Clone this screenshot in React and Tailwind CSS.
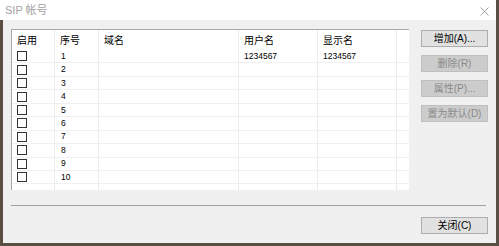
import React from 'react';

const COLS = [43, 44, 140, 79, 79];
const HEADERS = ['启用', '序号', '域名', '用户名', '显示名'];

const rows = Array.from({ length: 10 }, (_, i) => ({
    id: i + 1,
    domain: '',
    user: i === 0 ? '1234567' : '',
    display: i === 0 ? '1234567' : '',
}));

const Cell = ({ w, children, className = '' }) => (
    <div className={`h-full shrink-0 border-r border-[#ececec] flex items-center pl-[5px] ${className}`} style={{ width: w }}>
        {children}
    </div>
);

const DlgButton = ({ label, disabled }) => (
    <button
        className={`w-[67px] h-[17px] flex items-center justify-center text-[10px] leading-none border ${
            disabled ? 'bg-[#cccccc] border-[#bfbfbf] text-[#8a8a8a]' : 'bg-[#e1e1e1] border-[#adadad] text-black'
        }`}
    >
        {label}
    </button>
);

export default function App() {
    return (
        <div className="w-[499px] h-[246px] flex flex-col font-['Liberation_Sans','Noto_Sans_CJK_SC',sans-serif] overflow-hidden">
            {/* Title bar */}
            <div className="h-[20px] shrink-0 bg-white border-r-[3px] border-[#5a4f45] flex items-center justify-between pl-[5px] pr-[7px]">
                <span className="text-[11px] text-[#a3a3a3] leading-none">SIP 帐号</span>
                <svg width="9" height="9" viewBox="0 0 9 9" className="mt-[2px]">
                    <path d="M0.5 0.5 L8.5 8.5 M8.5 0.5 L0.5 8.5" stroke="#9a9a9a" strokeWidth="0.9" fill="none" />
                </svg>
            </div>

            {/* Body */}
            <div className="flex-1 flex flex-col bg-[#f0f0f0] border-x-[3px] border-b-[3px] border-[#5a4f45] px-[8px] pt-[9px] pb-[9px]">
                <div className="flex gap-[12px]">
                    {/* List view */}
                    <div className="w-[398px] h-[161px] bg-white border-l border-t border-[#a8a8a8] flex flex-col">
                        <div className="h-[20px] flex text-[10px] text-black">
                            {COLS.map((w, i) => (
                                <Cell key={i} w={w} className="border-[#e3e3e3]">{HEADERS[i]}</Cell>
                            ))}
                            <div className="flex-1" />
                        </div>
                        {rows.map((r) => (
                            <div key={r.id} className="h-[13.45px] flex border-b border-[#f0f0f0] text-[8.5px] text-black">
                                <Cell w={COLS[0]} className="pl-[3px]">
                                    <div className="w-[10px] h-[10px] border border-[#333333] bg-white" />
                                </Cell>
                                <Cell w={COLS[1]} className="pl-[6px]">{r.id}</Cell>
                                <Cell w={COLS[2]}>{r.domain}</Cell>
                                <Cell w={COLS[3]} className="pl-[4px]">{r.user}</Cell>
                                <Cell w={COLS[4]} className="pl-[4px]">{r.display}</Cell>
                                <div className="flex-1" />
                            </div>
                        ))}
                        <div className="flex-1 flex">
                            {COLS.map((w, i) => (
                                <Cell key={i} w={w} />
                            ))}
                        </div>
                    </div>

                    {/* Buttons */}
                    <div className="flex flex-col gap-[8px] pt-[1px]">
                        <DlgButton label="增加(A)..." />
                        <DlgButton label="删除(R)" disabled />
                        <DlgButton label="属性(P)..." disabled />
                        <DlgButton label="置为默认(D)" disabled />
                    </div>
                </div>

                <div className="mt-[15px] mr-[2px] h-px bg-[#a0a0a0]" />

                <div className="mt-[11px] flex justify-end">
                    <DlgButton label="关闭(C)" />
                </div>
            </div>
        </div>
    );
}
